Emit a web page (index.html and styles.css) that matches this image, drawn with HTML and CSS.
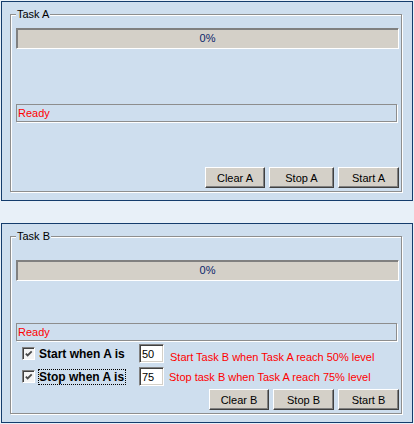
FILE: index.html
```html
<!DOCTYPE html>
<html>
<head>
<meta charset="utf-8">
<title>Tasks</title>
<link rel="stylesheet" href="styles.css">
</head>
<body>
  <div class="panel">
    <div class="group group-a">
      <span class="legend">Task A</span>
      <div class="progress">0%</div>
      <div class="status status-a">Ready</div>
      <div class="buttons">
        <button class="btn w60">Clear A</button>
        <button class="btn w65">Stop A</button>
        <button class="btn w61">Start A</button>
      </div>
    </div>
  </div>
  <div class="panel">
    <div class="group group-b">
      <span class="legend">Task B</span>
      <div class="progress">0%</div>
      <div class="status status-b">Ready</div>
      <div class="opt-row first">
        <span class="check"><svg width="11" height="11" viewBox="0 0 11 11"><path d="M2 4.5 L4 6.5 L8.5 2" fill="none" stroke="#4a4a4a" stroke-width="2"/></svg></span>
        <span class="cb-label"><span class="cb-text">Start when A is</span></span>
        <input class="num" type="text" value="50">
        <span class="hint hint-low">Start Task B when Task A reach 50% level</span>
      </div>
      <div class="opt-row">
        <span class="check"><svg width="11" height="11" viewBox="0 0 11 11"><path d="M2 4.5 L4 6.5 L8.5 2" fill="none" stroke="#4a4a4a" stroke-width="2"/></svg></span>
        <span class="cb-label"><span class="cb-text focus">Stop when A is</span></span>
        <input class="num" type="text" value="75">
        <span class="hint">Stop task B when Task A reach 75% level</span>
      </div>
      <div class="buttons">
        <button class="btn w60">Clear B</button>
        <button class="btn w61">Stop B</button>
        <button class="btn w61">Start B</button>
      </div>
    </div>
  </div>
</body>
</html>
```
FILE: styles.css
```css
* { box-sizing: border-box; }
html, body { margin: 0; }
body {
  background: #e8f0f8;
  font-family: "Liberation Sans", Arial, sans-serif;
  font-size: 11px;
  color: #000;
  padding-top: 1px;
  height: 424px;
  overflow: hidden;
}
.panel {
  margin-left: 1px;
  width: 412px;
  height: 200px;
  border: 1px solid #143c6c;
  background: #cedeee;
  padding: 12px 0 0 8px;
}
.panel + .panel { margin-top: 22px; }
.group {
  position: relative;
  width: 392px;
  height: 178px;
  border: 1px solid #8e8e8e;
  box-shadow: inset 1px 1px 0 #fff, 1px 1px 0 #fff;
  display: flex;
  flex-direction: column;
  padding: 13px 2px 3px 5px;
}
.group-b { padding-top: 23px; }
.legend {
  position: absolute;
  top: -7px;
  left: 5px;
  padding: 0 1px;
  line-height: 13px;
  background: #cedeee;
}
.progress {
  height: 21px;
  border: 1px solid;
  border-color: #808080 #fff #fff #808080;
  box-shadow: inset 1px 1px 0 #808080;
  background: #d4d0c8;
  color: #0a246a;
  text-align: center;
  line-height: 19px;
}
.status {
  width: 381px;
  height: 18px;
  border: 1px solid #8d8d8d;
  box-shadow: 1px 1px 0 #fff;
  color: #ff0000;
  padding-left: 1px;
  line-height: 16px;
}
.status-a { margin-top: 55px; }
.status-b { margin-top: 42px; }
.opt-row {
  display: flex;
  align-items: center;
  height: 19px;
  margin-top: 4px;
}
.opt-row.first { margin-top: 3px; }
.check {
  width: 13px;
  height: 13px;
  margin-left: 6px;
  border: 1px solid;
  border-color: #808080 #fff #fff #808080;
  box-shadow: inset 1px 1px 0 #404040;
  background: #f4f4f4;
  display: flex;
  align-items: center;
  justify-content: center;
  padding: 1px 0 0 1px;
}
.check svg { display: block; }
.cb-label {
  width: 104px;
  padding-left: 3px;
  display: flex;
}
.cb-text {
  font-size: 12px;
  font-weight: bold;
  line-height: 14px;
  border: 1px solid transparent;
  padding: 0 1px 0 0;
}
.cb-text.focus { border: 1px dotted #000; }
.num {
  width: 25px;
  height: 19px;
  margin: 0;
  border: 1px solid;
  border-color: #808080 #fff #fff #808080;
  box-shadow: inset 1px 1px 0 #404040, inset -1px -1px 0 #d4d0c8;
  background: #fff;
  font: 11px "Liberation Sans", Arial, sans-serif;
  color: #000;
  padding: 0 0 0 2px;
  outline: none;
}
.hint {
  color: #ff0000;
  margin-left: 5px;
  white-space: nowrap;
}
.hint-low { margin-left: 6px; padding-top: 6px; }
.buttons {
  margin-top: auto;
  display: flex;
  justify-content: flex-end;
  gap: 4px;
}
.btn {
  height: 21px;
  margin: 0;
  padding: 0;
  border: 1px solid;
  border-color: #fff #404040 #404040 #fff;
  box-shadow: inset -1px -1px 0 #808080;
  background: #d4d0c8;
  font: 11px "Liberation Sans", Arial, sans-serif;
  color: #000;
}
.w60 { width: 60px; }
.w61 { width: 61px; }
.w65 { width: 65px; }
```
